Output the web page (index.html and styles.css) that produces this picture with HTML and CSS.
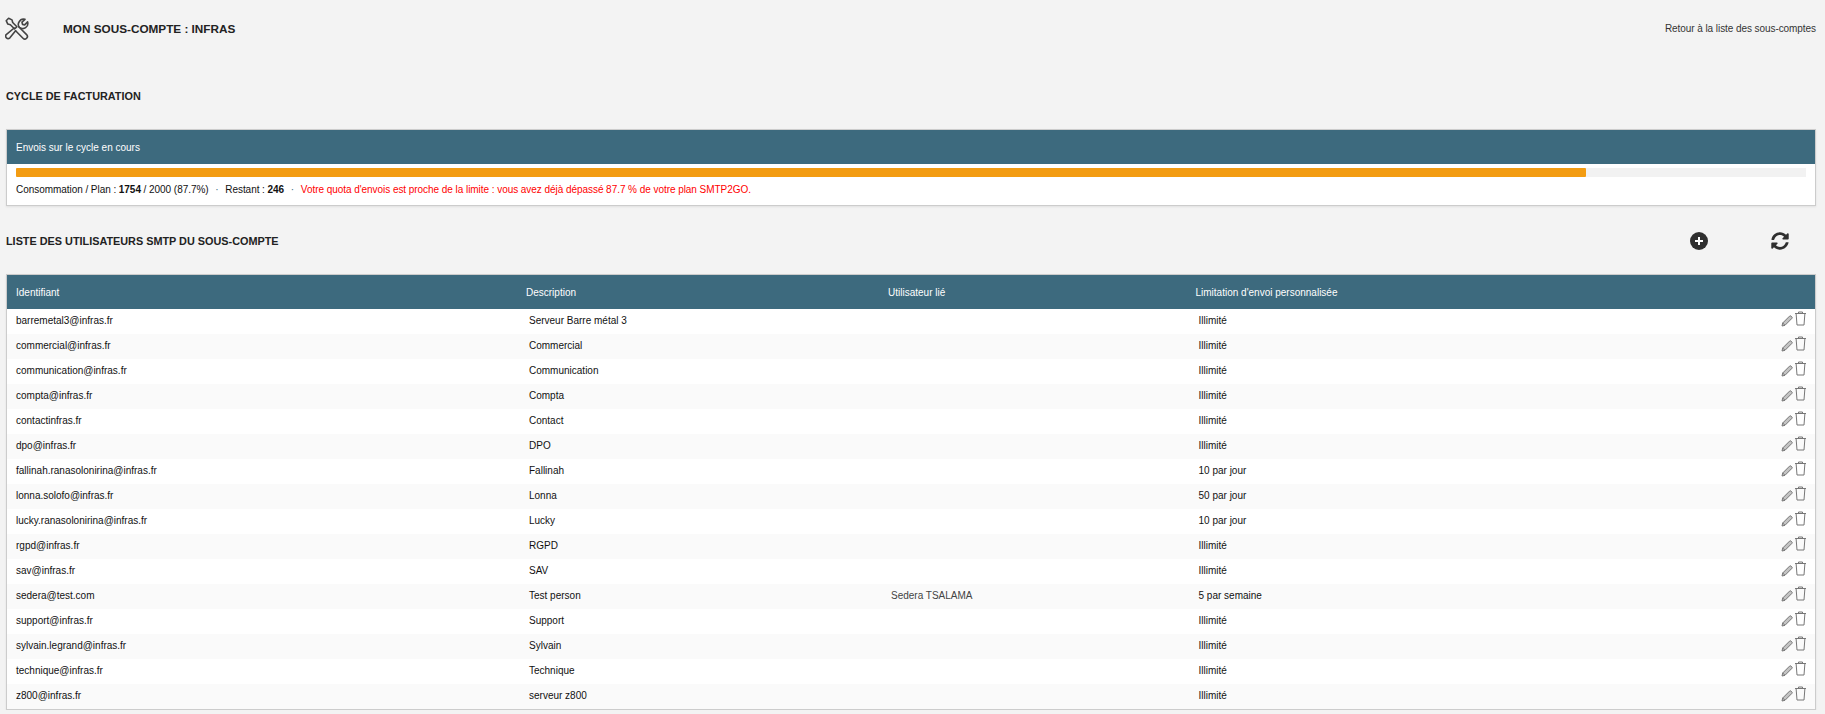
FILE: index.html
```html
<!DOCTYPE html>
<html lang="fr">
<head>
  <meta charset="UTF-8">
  <title>Mon sous-compte : INFRAS</title>
  <link rel="stylesheet" href="styles.css">
</head>
<body>

<svg class="sprites" width="0" height="0">
  <symbol id="icon-edit" viewBox="0 0 12 12">
    <path d="M1 11l.7-3L8.6 1.1a1 1 0 0 1 1.4 0l.9.9a1 1 0 0 1 0 1.4L4 10.3z" fill="#c4c4c4" stroke="#777" stroke-width="1"/>
    <path d="M1.7 8L4 10.3" fill="none" stroke="#777" stroke-width="1"/>
  </symbol>
  <symbol id="icon-trash" viewBox="0 0 12 15">
    <path d="M.5 2.500h11M4 2.500V1h4v1.500M1.600 2.500l.9 11.500h7l.9-11.500" fill="none" stroke="#777" stroke-width="1"/>
  </symbol>
</svg>

<header class="page-head">
  <svg class="tools-icon" viewBox="0 0 24 24" fill="none" stroke="#444" stroke-width="1.6" stroke-linejoin="round" stroke-linecap="round">
    <path d="M1.2 3.700l2.400-2.400 3.400 1.600.7 2.600 4.200 4.200-2.300 2.300-4.200-4.200-2.600-.7z"/>
    <path d="M14.200 10.200l7.400 7.400a2.500 2.500 0 0 1-3.600 3.600l-7.400-7.400"/>
    <path d="M10.600 13.800l-5.900 7.300a2.500 2.500 0 0 1-3.500-3.500l8-6.600"/>
    <path d="M14.200 10.200a4.800 4.800 0 0 1-.2-5.200c1.200-2.200 3.800-3.300 6-2.700L17 5.200l.5 2.200 2.200.5 2.900-3c.6 2.200-.2 4.600-2 5.800a4.800 4.800 0 0 1-5 .2"/>
  </svg>
  <h1>MON SOUS-COMPTE : INFRAS</h1>
  <a class="back-link" href="#">Retour à la liste des sous-comptes</a>
</header>

<h2 class="section-title cycle-title">CYCLE DE FACTURATION</h2>

<section class="panel">
  <div class="panel-head">Envois sur le cycle en cours</div>
  <div class="panel-body">
    <div class="progress"><div class="progress-fill" style="width: 87.7%"></div></div>
    <p class="usage">Consommation / Plan : <b>1754</b> / 2000 (87.7%) <span class="sep">·</span> Restant : <b>246</b> <span class="sep">·</span> <span class="warning">Votre quota d'envois est proche de la limite : vous avez déjà dépassé 87.7 % de votre plan SMTP2GO.</span></p>
  </div>
</section>

<div class="list-head">
  <h2 class="section-title">LISTE DES UTILISATEURS SMTP DU SOUS-COMPTE</h2>
  <div class="list-actions">
    <svg class="add-icon" viewBox="0 0 18 18"><circle cx="9" cy="9" r="9" fill="#2f2f2f"/><path d="M9 5v8M5 9h8" stroke="#fff" stroke-width="2"/></svg>
    <svg class="sync-icon" viewBox="0 0 512 512"><path fill="#2f2f2f" d="M370.72 133.28C339.458 104.008 298.888 87.962 255.848 88c-77.458.068-144.328 53.178-162.791 126.85-1.344 5.363-6.122 9.15-11.651 9.15H24.103c-7.498 0-13.194-6.807-11.807-14.176C33.933 94.924 134.813 8 256 8c66.448 0 126.791 26.136 171.315 68.685L463.03 40.97C478.149 25.851 504 36.559 504 57.941V192c0 13.255-10.745 24-24 24H345.941c-21.382 0-32.09-25.851-16.971-40.971l41.75-41.749zM32 296h134.059c21.382 0 32.09 25.851 16.971 40.971l-41.75 41.75c31.262 29.273 71.835 45.319 114.876 45.28 77.418-.07 144.315-53.144 162.787-126.849 1.344-5.363 6.122-9.15 11.651-9.15h57.304c7.498 0 13.194 6.807 11.807 14.176C478.067 417.076 377.187 504 256 504c-66.448 0-126.791-26.136-171.315-68.685L48.97 471.03C33.851 486.149 8 475.441 8 454.059V320c0-13.255 10.745-24 24-24z"/></svg>
  </div>
</div>

<section class="panel">
  <table class="users">
    <colgroup>
      <col class="col-id"><col class="col-desc"><col class="col-user"><col class="col-limit"><col>
    </colgroup>
    <thead>
      <tr><th>Identifiant</th><th>Description</th><th>Utilisateur lié</th><th>Limitation d'envoi personnalisée</th><th></th></tr>
    </thead>
    <tbody id="userRows"></tbody>
  </table>
</section>

<script>
  var users = [
    ["barremetal3@infras.fr", "Serveur Barre métal 3", "", "Illimité"],
    ["commercial@infras.fr", "Commercial", "", "Illimité"],
    ["communication@infras.fr", "Communication", "", "Illimité"],
    ["compta@infras.fr", "Compta", "", "Illimité"],
    ["contactinfras.fr", "Contact", "", "Illimité"],
    ["dpo@infras.fr", "DPO", "", "Illimité"],
    ["fallinah.ranasolonirina@infras.fr", "Fallinah", "", "10 par jour"],
    ["lonna.solofo@infras.fr", "Lonna", "", "50 par jour"],
    ["lucky.ranasolonirina@infras.fr", "Lucky", "", "10 par jour"],
    ["rgpd@infras.fr", "RGPD", "", "Illimité"],
    ["sav@infras.fr", "SAV", "", "Illimité"],
    ["sedera@test.com", "Test person", "Sedera TSALAMA", "5 par semaine"],
    ["support@infras.fr", "Support", "", "Illimité"],
    ["sylvain.legrand@infras.fr", "Sylvain", "", "Illimité"],
    ["technique@infras.fr", "Technique", "", "Illimité"],
    ["z800@infras.fr", "serveur z800", "", "Illimité"]
  ];

  // Build the table rows
  var tbody = document.getElementById("userRows");
  users.forEach(function(u) {
    tbody.innerHTML += `<tr>
      <td>${u[0]}</td>
      <td>${u[1]}</td>
      <td class="linked">${u[2]}</td>
      <td>${u[3]}</td>
      <td class="row-actions"><svg class="edit-icon"><use href="#icon-edit"/></svg><svg class="trash-icon"><use href="#icon-trash"/></svg></td>
    </tr>`;
  });
</script>
</body>
</html>
```

FILE: styles.css
```css
body { margin: 0; padding: 0 9px 0 6px; background: #f3f3f3; color: #111; font-family: "Liberation Sans", Arial, sans-serif; font-size: 10px; }
h1, h2, p { margin: 0; }

.sprites { position: absolute; }

.page-head { display: flex; align-items: center; height: 56px; }
.tools-icon { width: 24px; height: 24px; margin-left: -1px; margin-top: 1px; }
.page-head h1 { margin: 1px 0 0 34px; font-size: 11.75px; font-weight: bold; color: #222; }
.back-link { margin-left: auto; color: #333; letter-spacing: -.07px; text-decoration: none; }

.section-title { font-size: 10.85px; font-weight: bold; color: #222; }
.cycle-title { height: 28px; line-height: 28px; margin: 26px 0 19px; }

.panel { background: #fff; border: 1px solid #ccc; box-shadow: 0 1px 2px rgba(0,0,0,.08); }
.panel-head { height: 34px; line-height: 35px; padding: 0 9px; background: #3d6a7e; color: #fff; }
.panel-body { height: 41px; padding: 4px 9px 0; box-sizing: border-box; }
.progress { height: 9px; background: #f2f2f2; }
.progress-fill { height: 100%; background: #f39c12; border-radius: 1px; }
.usage { margin-top: 6px; letter-spacing: -.05px; line-height: 13px; }
.sep { margin: 0 4px; color: #3d6a7e; }
.warning { color: #f00; }

.list-head { display: flex; align-items: center; justify-content: space-between; height: 30px; margin: 20px 0 18px; }
.list-actions { display: flex; align-items: center; gap: 63px; padding-right: 27px; }
.add-icon { width: 18px; height: 18px; display: block; }
.sync-icon { width: 18px; height: 18px; display: block; margin-top: -1px; }

.users { width: 100%; table-layout: fixed; border-collapse: collapse; }
.col-id { width: 510px; }
.col-desc { width: 362px; }
.col-user { width: 307.5px; }
.col-limit { width: 400px; }
.users th { height: 34px; padding: 0 9px; background: #3d6a7e; color: #fff; font-weight: normal; text-align: left; }
.users td { height: 25px; padding: 0 12px 2px; box-sizing: border-box; }
.users td:first-child { padding-left: 9px; }
.users tbody tr:nth-child(even) { background: #fafafa; }
.linked { color: #444; }
.row-actions { text-align: right; white-space: nowrap; }
.users td.row-actions { padding: 0 8px 4px 0; }
.edit-icon { width: 12px; height: 12px; margin-right: 1px; vertical-align: -1px; }
.trash-icon { width: 13px; height: 15px; vertical-align: 0; }
```
